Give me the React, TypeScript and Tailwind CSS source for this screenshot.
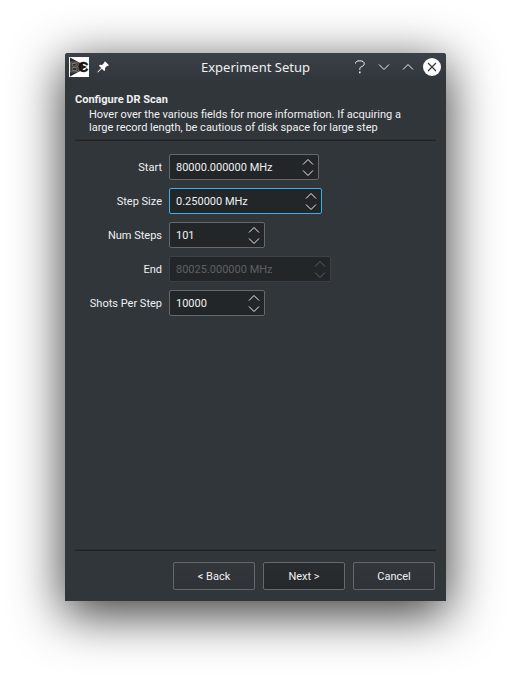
import React from "react";

function Chevron({ up = false, w = 12, color = "#eff0f1", sw = 1 }: { up?: boolean; w?: number; color?: string; sw?: number }) {
  return (
    <svg width={w} height="8" viewBox={`0 0 ${w} 8`} fill="none" stroke={color} strokeWidth={sw}>
      <path d={up ? `M1 6.5 L${w / 2} 1.5 L${w - 1} 6.5` : `M1 1.5 L${w / 2} 6.5 L${w - 1} 1.5`} />
    </svg>
  );
}

function Logo() {
  return (
    <svg width="20" height="20" viewBox="0 0 20 20" className="shrink-0">
      <rect width="20" height="20" fill="#fff" />
      <path d="M1 0.5 L14 7.5 V12.5 L1 19.5Z" fill="#2a2a2a" />
      <text x="0.5" y="15" fontSize="14" fontWeight="700" fontFamily="Liberation Sans, sans-serif" fill="#3a3a3a" stroke="#8c8c8c" strokeWidth="0.6">B</text>
      <text x="9.3" y="15" fontSize="14" fontWeight="700" fontFamily="Liberation Sans, sans-serif" fill="#151515" stroke="#151515" strokeWidth="0.4">C</text>
      <path d="M13.5 8 L18 10 L13.5 12Z" fill="#151515" />
    </svg>
  );
}

function Pin() {
  return (
    <svg width="12" height="12" viewBox="0 0 12 12" className="ml-2 shrink-0" fill="#fcfcfc">
      <path d="M8 0.2 L12 4.2 L10.8 5 L10.2 4.8 L8 7 L8.2 9 L7.2 10 L4.8 7.7 L0.8 11.5 L0.3 11 L4.2 7.1 L1.9 4.8 L2.9 3.8 L5 4 L7.3 1.8 L7.1 1.2Z" />
    </svg>
  );
}

type FieldProps = { label: string; value: string; width: string; focused?: boolean; disabled?: boolean };

function Field({ label, value, width, focused, disabled }: FieldProps) {
  const border = focused ? "border-[#3daee9]" : disabled ? "border-[#3e4246]" : "border-[#65696c]";
  const color = disabled ? "#5d6063" : "#eff0f1";
  return (
    <div className="flex h-[26px] items-center">
      <label className="w-[87px] text-right">{label}</label>
      <div className={`ml-[7px] flex h-[26px] items-center justify-between rounded-[2px] border bg-[#232629] pl-1.5 pr-1 ${border} ${width} ${disabled ? "text-[#5d6063]" : ""}`}>
        <span>{value}</span>
        <span className="flex flex-col gap-[3px]">
          <Chevron up color={color} />
          <Chevron color={color} />
        </span>
      </div>
    </div>
  );
}

function Button({ children, primary }: { children: React.ReactNode; primary?: boolean }) {
  return (
    <button className={`h-7 w-[82px] rounded-[2px] border border-[#65696c] ${primary ? "bg-linear-to-b from-[#2a2d30] to-[#25282b]" : "bg-linear-to-b from-[#33373b] to-[#2f3337]"}`}>
      {children}
    </button>
  );
}

function Rule() {
  return <div className="mx-2.5 h-[2px] w-[361px] border-t border-[#2a2e31] bg-[#212427]" />;
}

export default function App() {
  return (
    <main className="h-[678px] w-[511px] overflow-hidden bg-white pl-[65px] pt-[53px]">
      <section className="flex h-[548px] w-[381px] flex-col rounded-t-[3px] bg-[#31363b] font-['Roboto',sans-serif] text-[11px] leading-[13px] text-[#eff0f1] shadow-[0_12px_50px_2px_rgba(0,0,0,0.76)]">
        <header className="flex h-7 shrink-0 items-center rounded-t-[3px] bg-linear-to-b from-[#3c4149] to-[#31363b] pl-1 pr-[5px]">
          <Logo />
          <Pin />
          <h1 className="ml-[92px] w-[110px] whitespace-nowrap font-['Noto_Sans',sans-serif] text-[13px] leading-5">Experiment Setup</h1>
          <svg width="12" height="16" viewBox="0 0 12 16" className="ml-[43px]" fill="none" stroke="#fcfcfc" strokeWidth="1">
            <path d="M1.5 4.5 C1.5 2.6 3 1.8 5.8 1.8 C8.6 1.8 10.2 2.7 10.2 4.7 C10.2 6.3 9 7 7.6 7.6 C6.2 8.2 5.8 8.8 5.8 10.8" />
            <path d="M5.8 12.6 V14.2" strokeWidth="1.5" />
          </svg>
          <span className="ml-3"><Chevron /></span>
          <span className="ml-3"><Chevron up /></span>
          <svg width="18" height="18" viewBox="0 0 18 18" className="ml-auto">
            <circle cx="9" cy="9" r="9" fill="#fcfcfc" />
            <path d="M5 5 L13 13 M13 5 L5 13" stroke="#31363b" strokeWidth="1.1" />
          </svg>
        </header>
        <div className="h-[58px] px-2.5 pt-3">
          <h2 className="font-bold">Configure DR Scan</h2>
          <p className="ml-3.5 mt-[2px] whitespace-nowrap">
            Hover over the various fields for more information. If acquiring a<br />
            large record length, be cautious of disk space for large step
          </p>
        </div>
        <Rule />
        <form className="mt-[13px] flex flex-col gap-2 pl-2.5">
          <Field label="Start" value="80000.000000 MHz" width="w-[150px]" />
          <Field label="Step Size" value="0.250000 MHz" width="w-[153px]" focused />
          <Field label="Num Steps" value="101" width="w-[96px]" />
          <Field label="End" value="80025.000000 MHz" width="w-[162px]" disabled />
          <Field label="Shots Per Step" value="10000" width="w-[96px]" />
        </form>
        <div className="mt-auto"><Rule /></div>
        <footer className="mb-[11px] mt-[11px] flex justify-end gap-2 pr-[11px]">
          <Button>&lt; Back</Button>
          <Button primary>Next &gt;</Button>
          <Button>Cancel</Button>
        </footer>
      </section>
    </main>
  );
}
